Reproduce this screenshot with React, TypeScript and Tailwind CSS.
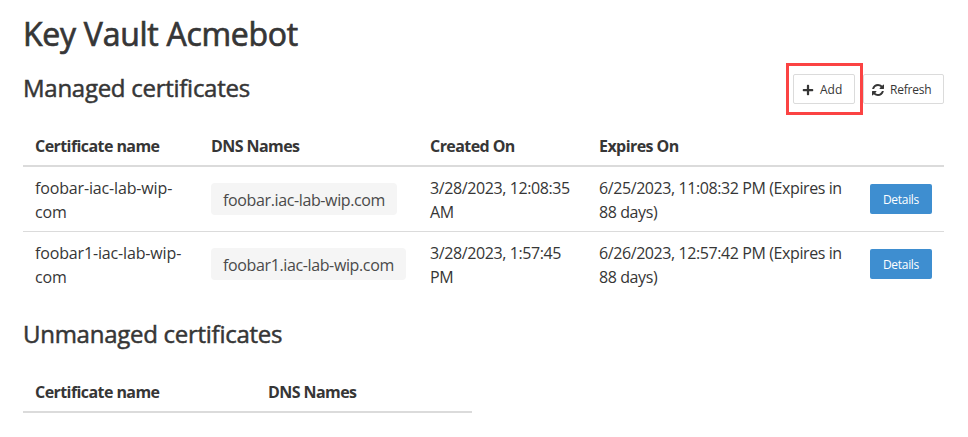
import React from "react";
import { FaPlus } from "react-icons/fa";

type Certificate = { name: string; dns: string; created: string; expires: string };

const certificates: Certificate[] = [
  { name: "foobar-iac-lab-wip-com", dns: "foobar.iac-lab-wip.com", created: "3/28/2023, 12:08:35 AM", expires: "6/25/2023, 11:08:32 PM (Expires in 88 days)" },
  { name: "foobar1-iac-lab-wip-com", dns: "foobar1.iac-lab-wip.com", created: "3/28/2023, 1:57:45 PM", expires: "6/26/2023, 12:57:42 PM (Expires in 88 days)" },
];

function SectionTitle({ children }: { children: React.ReactNode }) {
  return <h2 className="text-[24px] font-normal leading-[27px] tracking-[-0.27px] [-webkit-text-stroke:0.5px_#363636]">{children}</h2>;
}

function HeaderCell({ children }: { children?: React.ReactNode }) {
  return <th className="px-3 pb-[7px] pt-2 font-bold tracking-[-0.57px]">{children}</th>;
}

export default function App() {
  return (
    <main className="h-[437px] overflow-hidden bg-white pl-[23px] pt-[16px] font-['Open_Sans','Noto_Sans',sans-serif] text-[16px] leading-[24px] text-[#363636]">
      <h1 className="text-[32px] font-normal leading-[36px] tracking-[-0.27px] [-webkit-text-stroke:0.7px_#363636]">Key Vault Acmebot</h1>
      <div className="mt-[9px] flex h-[52px] w-[921px] items-center justify-between pb-px">
        <div className="pt-px"><SectionTitle>Managed certificates</SectionTitle></div>
        <div className="flex items-center gap-2 pt-[5px]">
          <div className="relative">
            <button className="flex h-[30px] w-[62px] items-center gap-[6px] rounded-[2px] border border-[#dbdbdb] pl-[8px] pt-px text-[12px]"><FaPlus size={12} />Add</button>
            <span className="pointer-events-none absolute -bottom-[11px] -left-[7px] -right-[8px] -top-[11px] border-[3px] border-[#fb4343]" />
          </div>
          <button className="flex h-[30px] w-[81px] items-center gap-[6px] rounded-[2px] border border-[#dbdbdb] pl-[8px] pt-px text-[12px] tracking-[-0.2px]">
            <svg width="12" height="12" viewBox="0 0 1536 1536" fill="currentColor" aria-hidden="true">
              <path d="M1511 928q0 5-1 7-64 268-268 434.500T764 1536q-146 0-282.500-55T238 1324l-129 129q-19 19-45 19t-45-19-19-45V960q0-26 19-45t45-19h448q26 0 45 19t19 45-19 45l-137 137q71 66 161 102t187 36q134 0 250-65t186-179q11-17 53-117 8-23 30-23h192q13 0 22.500 9.500t9.500 22.500zm25-800v448q0 26-19 45t-45 19h-448q-26 0-45-19t-19-45 19-45l138-138Q969 256 768 256q-134 0-250 65T332 500q-11 17-53 117-8 23-30 23H50q-13 0-22.500-9.500T18 608v-7q65-268 270-434.500T768 0q146 0 284 55.500T1297 212l130-129q19-19 45-19t45 19 19 45z" />
            </svg>
            Refresh
          </button>
        </div>
      </div>
      <table className="mt-[13px] w-[921px] table-fixed border-collapse text-left">
        <colgroup><col className="w-[176px]" /><col className="w-[219px]" /><col className="w-[169px]" /><col className="w-[271px]" /><col className="w-[86px]" /></colgroup>
        <thead>
          <tr className="border-b-2 border-[#dbdbdb]">
            <HeaderCell>Certificate name</HeaderCell>
            <HeaderCell>DNS Names</HeaderCell>
            <HeaderCell>Created On</HeaderCell>
            <HeaderCell>Expires On</HeaderCell>
            <HeaderCell />
          </tr>
        </thead>
        <tbody>{certificates.map((c) => (
          <tr key={c.name} className="border-b border-[#dbdbdb] last:border-0">
            <td className="px-3 pb-[7px] pt-[9px] tracking-[-0.15px]">{c.name}</td>
            <td className="px-3 py-2 align-middle"><span className="flex h-8 w-fit items-center whitespace-nowrap rounded bg-[#f5f5f5] px-3 pt-px tracking-[-0.37px] text-[#4a4a4a]">{c.dns}</span></td>
            <td className="px-3 pb-[7px] pt-[9px] tracking-[-0.4px]">{c.created}</td>
            <td className="px-3 pb-[7px] pt-[9px] tracking-[-0.41px]">{c.expires}</td>
            <td className="px-3 py-2"><button className="block h-[30px] w-[62px] rounded-[2px] bg-[#3e8ed0] pt-px text-[12px] tracking-[-0.3px] text-white">Details</button></td>
          </tr>
        ))}</tbody>
      </table>
      <div className="pt-[24px]"><SectionTitle>Unmanaged certificates</SectionTitle></div>
      <table className="mt-[25px] w-[449px] table-fixed border-collapse text-left">
        <colgroup><col className="w-[233px]" /><col className="w-[216px]" /></colgroup>
        <thead>
          <tr className="border-b-2 border-[#dbdbdb]">
            <HeaderCell>Certificate name</HeaderCell>
            <HeaderCell>DNS Names</HeaderCell>
          </tr>
        </thead>
      </table>
    </main>
  );
}
